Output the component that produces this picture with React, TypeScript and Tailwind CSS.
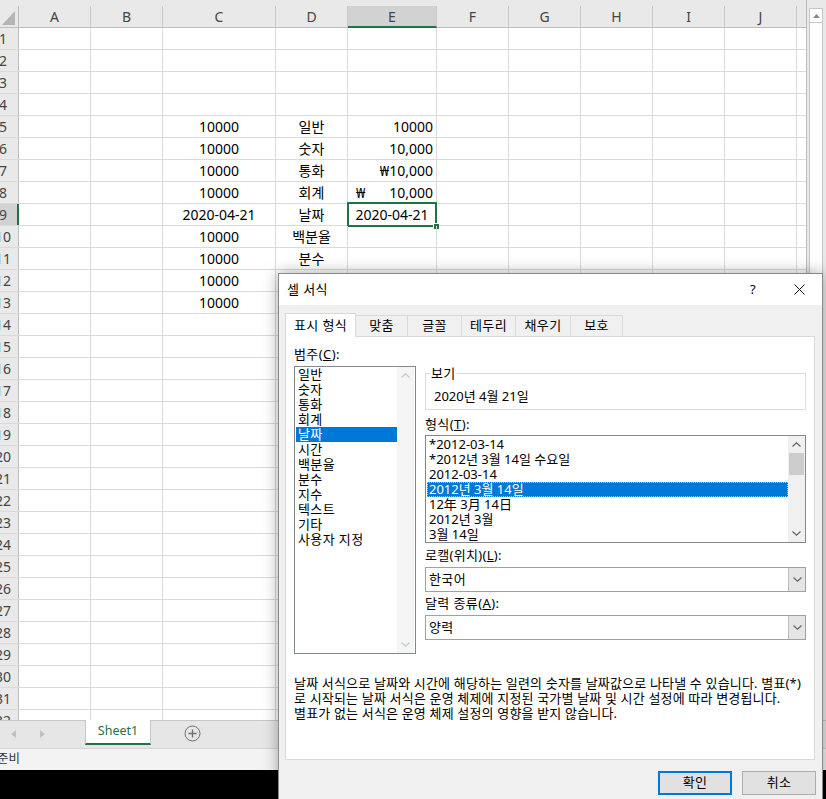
import React from "react";

const FONT = "font-['Noto_Sans','Noto_Sans_CJK_KR',sans-serif]";

const cols = [
  { n: "A", w: "w-[72px]" },
  { n: "B", w: "w-[72px]" },
  { n: "C", w: "w-[113px]" },
  { n: "D", w: "w-[72px]" },
  { n: "E", w: "w-[89px]" },
  { n: "F", w: "w-[72px]" },
  { n: "G", w: "w-[72px]" },
  { n: "H", w: "w-[72px]" },
  { n: "I", w: "w-[72px]" },
  { n: "J", w: "w-[72px]" },
];

type Val = { t: string; a: "c" | "r" | "acct" };

const cells: Record<string, Val> = {
  C5: { t: "10000", a: "c" },
  D5: { t: "일반", a: "c" },
  E5: { t: "10000", a: "r" },
  C6: { t: "10000", a: "c" },
  D6: { t: "숫자", a: "c" },
  E6: { t: "10,000", a: "r" },
  C7: { t: "10000", a: "c" },
  D7: { t: "통화", a: "c" },
  E7: { t: "₩10,000", a: "r" },
  C8: { t: "10000", a: "c" },
  D8: { t: "회계", a: "c" },
  E8: { t: "10,000", a: "acct" },
  C9: { t: "2020-04-21", a: "c" },
  D9: { t: "날짜", a: "c" },
  E9: { t: "2020-04-21", a: "c" },
  C10: { t: "10000", a: "c" },
  D10: { t: "백분율", a: "c" },
  C11: { t: "10000", a: "c" },
  D11: { t: "분수", a: "c" },
  C12: { t: "10000", a: "c" },
  C13: { t: "10000", a: "c" },
};

const rows = Array.from({ length: 32 }, (_, i) => i + 1);

const categories = ["일반", "숫자", "통화", "회계", "날짜", "시간", "백분율", "분수", "지수", "텍스트", "기타", "사용자 지정"];

const formats = [
  "*2012-03-14",
  "*2012년 3월 14일 수요일",
  "2012-03-14",
  "2012년 3월 14일",
  "12年 3月 14日",
  "2012년 3월",
  "3월 14일",
];

const tabs = [
  { t: "표시 형식", w: "w-[71px]" },
  { t: "맞춤", w: "w-[52px]" },
  { t: "글꼴", w: "w-[54px]" },
  { t: "테두리", w: "w-[54px]" },
  { t: "채우기", w: "w-[55px]" },
  { t: "보호", w: "w-[52px]" },
];

function ChevUp({ color = "#606060" }: { color?: string }) {
  return (
    <svg width="9" height="5" viewBox="0 0 9 5">
      <path d="M0.5 4.5 L4.5 0.8 L8.5 4.5" fill="none" stroke={color} strokeWidth="1.1" />
    </svg>
  );
}

function ChevDown({ color = "#606060" }: { color?: string }) {
  return (
    <svg width="9" height="5" viewBox="0 0 9 5">
      <path d="M0.5 0.5 L4.5 4.2 L8.5 0.5" fill="none" stroke={color} strokeWidth="1.1" />
    </svg>
  );
}

function Cell({ id, w }: { id: string; w: string }) {
  const v = cells[id];
  const selected = id === "E9";
  let align = "justify-center";
  if (v?.a === "r") align = "justify-end";
  if (v?.a === "acct") align = "justify-between pl-[8px]";
  return (
    <div className={`${w} relative h-full shrink-0 border-r border-[#dadada] flex items-center px-[3px] ${align}`}>
      {v?.a === "acct" ? <span>₩</span> : null}
      {v ? <span className="whitespace-nowrap">{v.t}</span> : null}
      {selected ? (
        <div className="absolute -left-[1px] -right-[1px] -top-[2px] -bottom-[2px] border-2 border-[#217346]">
          <div className="absolute -right-[5px] -bottom-[5px] w-[7px] h-[7px] bg-[#217346] border border-white" />
        </div>
      ) : null}
    </div>
  );
}

function Sheet() {
  return (
    <div className="w-[806px] shrink-0 overflow-hidden">
      <div className="flex h-[28px] pt-[6px] bg-[#e9e9e9] text-[14px] text-[#444]">
        <div className="w-[19px] h-[22px] shrink-0 border-r border-b border-[#bdbdbd] flex items-end justify-end pr-[3px] pb-[2px]">
          <svg width="13" height="14" viewBox="0 0 13 14">
            <path d="M13 0 L13 14 L0 14 Z" fill="#b5b5b5" />
          </svg>
        </div>
        {cols.map((c) => (
          <div
            key={c.n}
            className={`${c.w} h-[22px] shrink-0 border-r border-[#c8c8c8] flex items-center justify-center ${
              c.n === "E" ? "bg-[#d2d2d2] border-b-2 border-b-[#217346]" : "border-b border-b-[#bdbdbd]"
            }`}
          >
            {c.n}
          </div>
        ))}
        <div className="w-[9px] h-[22px] shrink-0 border-b border-[#bdbdbd]" />
      </div>
      {rows.map((r) => (
        <div key={r} className="flex h-[22px] border-b border-[#dadada] text-[14px] text-black">
          <div
            className={`w-[19px] h-full shrink-0 overflow-hidden flex items-center text-[#444] ${
              r === 9 ? "bg-[#d2d2d2] border-r-2 border-[#217346]" : "bg-[#e9e9e9] border-r border-[#bdbdbd]"
            }`}
          >
            <span className="w-[30px] shrink-0 -ml-[12px] text-center">{r}</span>
          </div>
          {cols.map((c) => (
            <Cell key={c.n} id={`${c.n}${r}`} w={c.w} />
          ))}
          <div className="w-[9px] shrink-0" />
        </div>
      ))}
    </div>
  );
}

function Dialog() {
  return (
    <div className="absolute left-[278px] top-[273px] w-[545px] h-[540px] border border-[#8a8a8a] bg-[#f0f0f0] shadow-[0_0_14px_rgba(0,0,0,0.35)] text-[13px] text-black">
      <div className="h-[31px] bg-white flex items-center pl-[8px] pr-[17px] tracking-[0.4px]">
        <span>셀 서식</span>
        <span className="ml-auto w-[10px] text-center">?</span>
        <svg className="ml-[36px]" width="11" height="11" viewBox="0 0 11 11">
          <path d="M0.5 0.5 L10.5 10.5 M10.5 0.5 L0.5 10.5" stroke="#111" strokeWidth="1" />
        </svg>
      </div>
      <div className="pt-[8px] pl-[6px] pr-[7px]">
        <div className="flex items-end h-[23px] tracking-[0.4px]">
          {tabs.map((t, i) =>
            i === 0 ? (
              <div
                key={t.t}
                className={`${t.w} h-[24px] -mb-px relative z-10 bg-white border-l border-t border-r border-[#d9d9d9] flex items-center justify-center`}
              >
                {t.t}
              </div>
            ) : (
              <div
                key={t.t}
                className={`${t.w} h-[21px] border-t border-r border-[#d9d9d9] flex items-center justify-center`}
              >
                {t.t}
              </div>
            )
          )}
        </div>
        <div className="h-[424px] border border-[#d9d9d9] bg-white pl-[8px] pt-[10px] leading-[15px]">
          <div className="flex">
            <div className="w-[122px] shrink-0">
              <div className="h-[15px] tracking-[0.4px]">
                범주(<span className="underline">C</span>):
              </div>
              <div className="mt-[4px] h-[288px] border border-[#828790] flex">
                <div className="w-[102px] pl-[1px] tracking-[0.4px]">
                  {categories.map((c) => (
                    <div
                      key={c}
                      className={`h-[15px] pl-[2px] whitespace-nowrap ${c === "날짜" ? "bg-[#0078d7] text-white" : ""}`}
                    >
                      {c}
                    </div>
                  ))}
                </div>
                <div className="w-[17px] bg-[#f5f5f5] flex flex-col items-center justify-between py-[6px]">
                  <ChevUp color="#c4c4c4" />
                  <ChevDown color="#c4c4c4" />
                </div>
              </div>
            </div>
            <div className="ml-[9px] w-[381px] shrink-0">
              <div className="relative mt-[26px] h-[37px] border border-[#dcdcdc]">
                <span className="absolute -top-[8px] left-[4px] bg-white px-[1px] tracking-[0.4px]">보기</span>
                <div className="pl-[8px] pt-[15px]">2020년 4월 21일</div>
              </div>
              <div className="mt-[7px] h-[15px] tracking-[0.4px]">
                형식(<span className="underline">T</span>):
              </div>
              <div className="mt-[3px] h-[108px] border border-[#828790] flex">
                <div className="w-[363px] pl-[1px] pt-[1px]">
                  {formats.map((f, i) => (
                    <div
                      key={f}
                      className={`h-[15px] pl-[2px] whitespace-nowrap ${
                        i === 3 ? "bg-[#0078d7] text-white outline-1 outline-dotted outline-[#9ec9f0] -outline-offset-1" : ""
                      }`}
                    >
                      {f}
                    </div>
                  ))}
                </div>
                <div className="w-[17px] bg-[#f0f0f0] flex flex-col">
                  <div className="h-[17px] flex items-center justify-center">
                    <ChevUp />
                  </div>
                  <div className="mx-[1px] h-[22px] bg-[#cdcdcd]" />
                  <div className="flex-1" />
                  <div className="h-[17px] flex items-center justify-center">
                    <ChevDown />
                  </div>
                </div>
              </div>
              <div className="mt-[5px] h-[15px] tracking-[0.3px]">
                로캘(위치)(<span className="underline">L</span>):
              </div>
              <div className="mt-[4px] h-[25px] border border-[#a0a0a0] bg-white flex items-center">
                <span className="pl-[3px] flex-1 tracking-[0.4px]">한국어</span>
                <div className="w-[17px] h-full bg-[#e5e5e5] border-l border-[#bcbcbc] flex items-center justify-center">
                  <ChevDown />
                </div>
              </div>
              <div className="mt-[4px] h-[15px] tracking-[0.4px]">
                달력 종류(<span className="underline">A</span>):
              </div>
              <div className="mt-[4px] h-[25px] border border-[#a0a0a0] bg-white flex items-center">
                <span className="pl-[3px] flex-1 tracking-[0.4px]">양력</span>
                <div className="w-[17px] h-full bg-[#e5e5e5] border-l border-[#bcbcbc] flex items-center justify-center">
                  <ChevDown />
                </div>
              </div>
            </div>
          </div>
          <div className="mt-[22px] whitespace-nowrap tracking-[0.17px]">
            <div>날짜 서식으로 날짜와 시간에 해당하는 일련의 숫자를 날짜값으로 나타낼 수 있습니다. 별표(*)</div>
            <div>로 시작되는 날짜 서식은 운영 체제에 지정된 국가별 날짜 및 시간 설정에 따라 변경됩니다.</div>
            <div>별표가 없는 서식은 운영 체제 설정의 영향을 받지 않습니다.</div>
          </div>
        </div>
        <div className="mt-[11px] -mr-px flex justify-end gap-[10px] tracking-[0.4px]">
          <button className="w-[74px] h-[24px] border-2 border-[#0078d7] bg-[#e1e1e1]">확인</button>
          <button className="w-[74px] h-[24px] border border-[#adadad] bg-[#e1e1e1]">취소</button>
        </div>
      </div>
    </div>
  );
}

export default function App() {
  return (
    <div className={`relative w-[826px] h-[799px] overflow-hidden bg-white ${FONT}`}>
      <div className="flex h-[720px]">
        <Sheet />
        <div className="w-[20px] shrink-0 border-l border-[#bdbdbd] bg-[#e9e9e9] pt-[8px] pl-[2px]">
          <div className="w-[14px] h-[712px] border border-[#c6c6c6] bg-white">
            <div className="h-[14px] border-b border-[#c6c6c6] flex items-center justify-center">
              <svg width="7" height="4" viewBox="0 0 7 4">
                <path d="M0 4 L3.5 0 L7 4 Z" fill="#8a8a8a" />
              </svg>
            </div>
          </div>
        </div>
      </div>
      <div className="h-[28px] border-t border-[#c6c6c6] bg-[#e6e6e6] flex items-start">
        <div className="w-[85px] h-[25px] flex items-center">
          <svg className="ml-[11px]" width="5" height="8" viewBox="0 0 5 8">
            <path d="M5 0 L0 4 L5 8 Z" fill="#c0c0c0" />
          </svg>
          <svg className="ml-[24px]" width="5" height="8" viewBox="0 0 5 8">
            <path d="M0 0 L5 4 L0 8 Z" fill="#c0c0c0" />
          </svg>
        </div>
        <div className="w-[66px] h-[25px] -mt-px bg-white border-x border-[#c6c6c6] border-b-2 border-b-[#217346] flex items-center justify-center text-[12.5px] text-[#217346]">
          Sheet1
        </div>
        <div className="ml-[33px] h-[25px] flex items-center">
          <svg width="17" height="17" viewBox="0 0 17 17">
            <circle cx="8.5" cy="8.5" r="7.5" fill="none" stroke="#707070" strokeWidth="1" />
            <path d="M8.5 4.5 V12.5 M4.5 8.5 H12.5" stroke="#707070" strokeWidth="1.3" />
          </svg>
        </div>
      </div>
      <div className="h-[22px] border-t border-[#d4d4d4] bg-[#f3f3f3] flex items-center text-[12.5px] text-[#333]">
        <span className="-ml-[3px]">준비</span>
      </div>
      <div className="h-[29px] bg-black" />
      <Dialog />
    </div>
  );
}
